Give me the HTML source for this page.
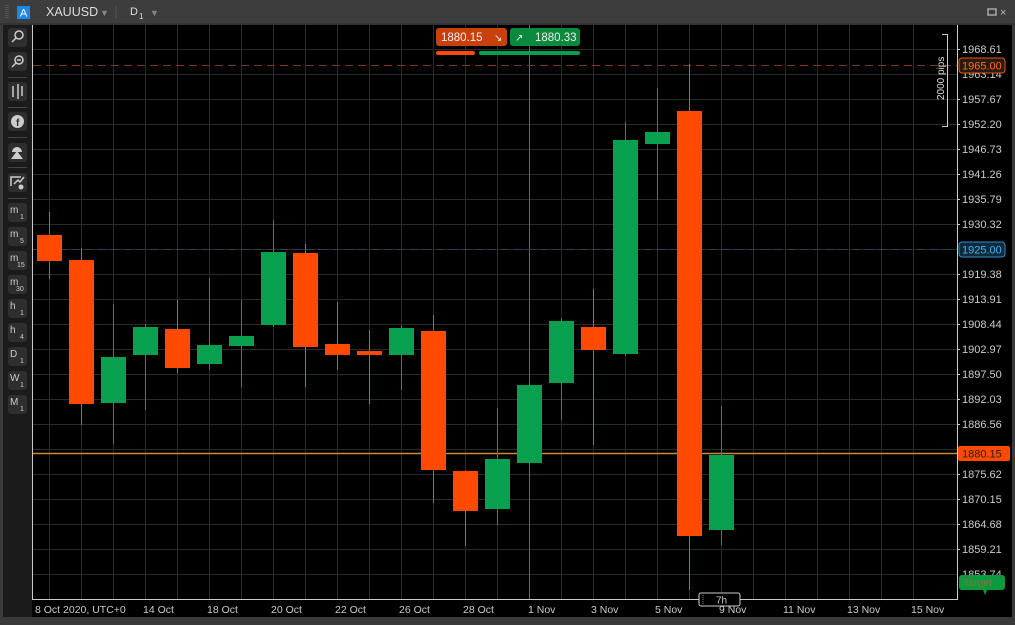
<!DOCTYPE html>
<html><head><meta charset="utf-8"><style>
body{margin:0;width:1015px;height:625px;overflow:hidden;background:#3c3c3c;font-family:"Liberation Sans",sans-serif}
svg{position:absolute;left:0;top:0}
</style></head><body>
<svg width="1015" height="625" xmlns="http://www.w3.org/2000/svg" font-family="Liberation Sans, sans-serif">
<rect width="1015" height="625" fill="#3a3a3a"/>
<rect x="0" y="0" width="1015" height="24" fill="#3d3d3d"/>
<line x1="0" y1="24" x2="1015" y2="24" stroke="#2a2a2a"/>
<g stroke="#666"><line x1="6" y1="5" x2="6" y2="19" stroke-dasharray="1,1"/><line x1="8" y1="5" x2="8" y2="19" stroke-dasharray="1,1"/></g>
<rect x="17" y="6" width="13" height="13" fill="#1e88e5"/>
<text x="23.5" y="16.5" font-size="11" fill="#fff" text-anchor="middle">A</text>
<text x="46" y="16" font-size="12.5" fill="#ddd">XAUUSD</text>
<text x="100" y="16" font-size="9" fill="#888">▼</text>
<line x1="116" y1="6" x2="116" y2="18" stroke="#555"/>
<text x="130" y="15" font-size="11" fill="#ddd">D</text><text x="139" y="19" font-size="8" fill="#ddd">1</text>
<text x="150" y="16" font-size="9" fill="#888">▼</text>
<rect x="988" y="9" width="8" height="6" fill="none" stroke="#bbb" stroke-width="1.3"/>
<text x="1000" y="16" font-size="11" fill="#bbb">×</text>
<rect x="3" y="25" width="1009" height="592" fill="#000"/>
<rect x="3" y="25" width="29" height="592" fill="#1b1b1b"/>
<line x1="32.5" y1="25" x2="32.5" y2="600" stroke="#ccc"/>
<g stroke="#2b2b2b" stroke-width="1">
<line x1="33" y1="49.5" x2="957" y2="49.5"/><line x1="33" y1="74.5" x2="957" y2="74.5"/><line x1="33" y1="99.5" x2="957" y2="99.5"/><line x1="33" y1="124.5" x2="957" y2="124.5"/><line x1="33" y1="149.5" x2="957" y2="149.5"/><line x1="33" y1="174.5" x2="957" y2="174.5"/><line x1="33" y1="199.5" x2="957" y2="199.5"/><line x1="33" y1="224.5" x2="957" y2="224.5"/><line x1="33" y1="249.5" x2="957" y2="249.5"/><line x1="33" y1="274.5" x2="957" y2="274.5"/><line x1="33" y1="299.5" x2="957" y2="299.5"/><line x1="33" y1="324.5" x2="957" y2="324.5"/><line x1="33" y1="349.5" x2="957" y2="349.5"/><line x1="33" y1="374.5" x2="957" y2="374.5"/><line x1="33" y1="399.5" x2="957" y2="399.5"/><line x1="33" y1="424.5" x2="957" y2="424.5"/><line x1="33" y1="449.5" x2="957" y2="449.5"/><line x1="33" y1="474.5" x2="957" y2="474.5"/><line x1="33" y1="499.5" x2="957" y2="499.5"/><line x1="33" y1="524.5" x2="957" y2="524.5"/><line x1="33" y1="549.5" x2="957" y2="549.5"/><line x1="33" y1="574.5" x2="957" y2="574.5"/>
<line x1="49.5" y1="25" x2="49.5" y2="600"/><line x1="81.5" y1="25" x2="81.5" y2="600"/><line x1="113.5" y1="25" x2="113.5" y2="600"/><line x1="145.5" y1="25" x2="145.5" y2="600"/><line x1="177.5" y1="25" x2="177.5" y2="600"/><line x1="209.5" y1="25" x2="209.5" y2="600"/><line x1="241.5" y1="25" x2="241.5" y2="600"/><line x1="273.5" y1="25" x2="273.5" y2="600"/><line x1="305.5" y1="25" x2="305.5" y2="600"/><line x1="337.5" y1="25" x2="337.5" y2="600"/><line x1="369.5" y1="25" x2="369.5" y2="600"/><line x1="401.5" y1="25" x2="401.5" y2="600"/><line x1="433.5" y1="25" x2="433.5" y2="600"/><line x1="465.5" y1="25" x2="465.5" y2="600"/><line x1="497.5" y1="25" x2="497.5" y2="600"/><line x1="561.5" y1="25" x2="561.5" y2="600"/><line x1="593.5" y1="25" x2="593.5" y2="600"/><line x1="625.5" y1="25" x2="625.5" y2="600"/><line x1="657.5" y1="25" x2="657.5" y2="600"/><line x1="689.5" y1="25" x2="689.5" y2="600"/><line x1="721.5" y1="25" x2="721.5" y2="600"/><line x1="753.5" y1="25" x2="753.5" y2="600"/><line x1="785.5" y1="25" x2="785.5" y2="600"/><line x1="817.5" y1="25" x2="817.5" y2="600"/><line x1="849.5" y1="25" x2="849.5" y2="600"/><line x1="881.5" y1="25" x2="881.5" y2="600"/><line x1="913.5" y1="25" x2="913.5" y2="600"/>
</g>
<line x1="529.5" y1="25" x2="529.5" y2="600" stroke="#666"/>
<line x1="33" y1="65.5" x2="957" y2="65.5" stroke="#7a3a22" stroke-dasharray="8,5"/>
<line x1="33" y1="249.5" x2="957" y2="249.5" stroke="#24405a" stroke-dasharray="8,5"/>
<line x1="33" y1="453.5" x2="957" y2="453.5" stroke="#c98a3a" stroke-width="1.5"/>
<g stroke-width="1">
<g fill="#ff4a00" stroke="#ff4a00">
<line x1="49.5" y1="212" x2="49.5" y2="279"/><rect x="37" y="235" width="25" height="26" stroke="none"/>
<line x1="81.5" y1="248" x2="81.5" y2="425"/><rect x="69" y="260" width="25" height="144" stroke="none"/>
<line x1="177.5" y1="300" x2="177.5" y2="373"/><rect x="165" y="329" width="25" height="39" stroke="none"/>
<line x1="305.5" y1="244" x2="305.5" y2="387"/><rect x="293" y="253" width="25" height="94" stroke="none"/>
<line x1="337.5" y1="302" x2="337.5" y2="370"/><rect x="325" y="344" width="25" height="11" stroke="none"/>
<line x1="369.5" y1="330" x2="369.5" y2="404"/><rect x="357" y="351" width="25" height="4" stroke="none"/>
<line x1="433.5" y1="315" x2="433.5" y2="503"/><rect x="421" y="331" width="25" height="139" stroke="none"/>
<line x1="465.5" y1="470" x2="465.5" y2="546"/><rect x="453" y="471" width="25" height="40" stroke="none"/>
<line x1="593.5" y1="289" x2="593.5" y2="445"/><rect x="581" y="327" width="25" height="23" stroke="none"/>
<line x1="689.5" y1="64" x2="689.5" y2="590"/><rect x="677" y="111" width="25" height="425" stroke="none"/>
</g>
<g fill="#07a04e" stroke="#07a04e">
<line x1="113.5" y1="304" x2="113.5" y2="444"/><rect x="101" y="357" width="25" height="46" stroke="none"/>
<line x1="145.5" y1="324" x2="145.5" y2="410"/><rect x="133" y="327" width="25" height="28" stroke="none"/>
<line x1="209.5" y1="278" x2="209.5" y2="370"/><rect x="197" y="345" width="25" height="19" stroke="none"/>
<line x1="241.5" y1="300" x2="241.5" y2="387"/><rect x="229" y="336" width="25" height="10" stroke="none"/>
<line x1="273.5" y1="220" x2="273.5" y2="327"/><rect x="261" y="252" width="25" height="73" stroke="none"/>
<line x1="401.5" y1="325" x2="401.5" y2="390"/><rect x="389" y="328" width="25" height="27" stroke="none"/>
<line x1="497.5" y1="408" x2="497.5" y2="525"/><rect x="485" y="459" width="25" height="50" stroke="none"/>
<line x1="529.5" y1="380" x2="529.5" y2="475"/><rect x="517" y="385" width="25" height="78" stroke="none"/>
<line x1="561.5" y1="318" x2="561.5" y2="420"/><rect x="549" y="321" width="25" height="62" stroke="none"/>
<line x1="625.5" y1="122" x2="625.5" y2="356"/><rect x="613" y="140" width="25" height="214" stroke="none"/>
<line x1="657.5" y1="88" x2="657.5" y2="200"/><rect x="645" y="132" width="25" height="12" stroke="none"/>
<line x1="721.5" y1="406" x2="721.5" y2="545"/><rect x="709" y="455" width="25" height="75" stroke="none"/>
</g></g>
<rect x="436" y="28" width="71" height="18" rx="3" fill="#c8400c"/>
<text x="441" y="41" font-size="11.5" fill="#eee">1880.15</text><text x="494" y="41" font-size="10" fill="#eee">↘</text>
<rect x="510" y="28" width="70" height="18" rx="3" fill="#0b8a3e"/>
<text x="515" y="41" font-size="10" fill="#eee">↗</text><text x="535" y="41" font-size="11.5" fill="#eee">1880.33</text>
<rect x="436" y="51" width="39" height="4" rx="2" fill="#ff4a00"/>
<rect x="479" y="51" width="101" height="4" rx="2" fill="#07a04e"/>
<path d="M942 34.5H947.5V126.5H942" fill="none" stroke="#ccc"/>
<text transform="translate(944,100) rotate(-90)" font-size="10" fill="#ddd">2000 pips</text>
<line x1="957.5" y1="25" x2="957.5" y2="600" stroke="#ccc"/>
<line x1="33" y1="599.5" x2="957" y2="599.5" stroke="#ccc"/>
<g font-size="11" fill="#ccc">
<text x="962" y="53">1968.61</text><text x="962" y="78">1963.14</text><text x="962" y="103">1957.67</text><text x="962" y="128">1952.20</text><text x="962" y="153">1946.73</text><text x="962" y="178">1941.26</text><text x="962" y="203">1935.79</text><text x="962" y="228">1930.32</text><text x="962" y="278">1919.38</text><text x="962" y="303">1913.91</text><text x="962" y="328">1908.44</text><text x="962" y="353">1902.97</text><text x="962" y="378">1897.50</text><text x="962" y="403">1892.03</text><text x="962" y="428">1886.56</text><text x="962" y="478">1875.62</text><text x="962" y="503">1870.15</text><text x="962" y="528">1864.68</text><text x="962" y="553">1859.21</text><text x="962" y="578">1853.74</text>
</g>
<g stroke="#ccc"><line x1="957" y1="49.5" x2="960" y2="49.5"/><line x1="957" y1="99.5" x2="960" y2="99.5"/><line x1="957" y1="124.5" x2="960" y2="124.5"/><line x1="957" y1="149.5" x2="960" y2="149.5"/><line x1="957" y1="174.5" x2="960" y2="174.5"/><line x1="957" y1="199.5" x2="960" y2="199.5"/><line x1="957" y1="224.5" x2="960" y2="224.5"/><line x1="957" y1="274.5" x2="960" y2="274.5"/><line x1="957" y1="299.5" x2="960" y2="299.5"/><line x1="957" y1="324.5" x2="960" y2="324.5"/><line x1="957" y1="349.5" x2="960" y2="349.5"/><line x1="957" y1="374.5" x2="960" y2="374.5"/><line x1="957" y1="399.5" x2="960" y2="399.5"/><line x1="957" y1="424.5" x2="960" y2="424.5"/><line x1="957" y1="474.5" x2="960" y2="474.5"/><line x1="957" y1="499.5" x2="960" y2="499.5"/><line x1="957" y1="524.5" x2="960" y2="524.5"/><line x1="957" y1="549.5" x2="960" y2="549.5"/></g>
<rect x="959" y="58" width="46" height="15" rx="3" fill="#2a1a10" stroke="#e5580f"/><text x="962" y="69.5" font-size="11" fill="#ff6a20">1965.00</text>
<rect x="959" y="242" width="46" height="15" rx="3" fill="#0f2a3a" stroke="#2d8fd0"/><text x="962" y="253.5" font-size="11" fill="#4ab0f0">1925.00</text>
<rect x="958" y="446" width="52" height="15" rx="2" fill="#ff4a00"/><text x="962" y="457.5" font-size="11" fill="#222">1880.15</text>
<rect x="959" y="575" width="46" height="15" rx="3" fill="#0b9a3e"/><text x="963" y="586" font-size="10.5" fill="#7a7a3a">Target</text>
<path d="M983 590L985 595L987 590Z" fill="#0b9a3e"/>
<g font-size="10.5" fill="#ccc">
<text x="35" y="613">8 Oct 2020, UTC+0</text><text x="143" y="613">14 Oct</text><text x="207" y="613">18 Oct</text><text x="271" y="613">20 Oct</text><text x="335" y="613">22 Oct</text><text x="399" y="613">26 Oct</text><text x="463" y="613">28 Oct</text><text x="528" y="613">1 Nov</text><text x="591" y="613">3 Nov</text><text x="655" y="613">5 Nov</text><text x="719" y="613">9 Nov</text><text x="783" y="613">11 Nov</text><text x="847" y="613">13 Nov</text><text x="911" y="613">15 Nov</text>
</g>
<rect x="699" y="593" width="41" height="13" rx="2" fill="#000" stroke="#ccc"/>
<line x1="703" y1="595" x2="703" y2="605" stroke="#888" stroke-dasharray="1,1"/>
<text x="716" y="603.5" font-size="10" fill="#ccc">7h</text>
<g fill="#2e2e2e">
<rect x="8" y="28" width="19" height="19" rx="3"/><rect x="8" y="52" width="19" height="19" rx="3"/>
<rect x="8" y="82" width="19" height="19" rx="3"/><rect x="8" y="112" width="19" height="19" rx="3"/>
<rect x="8" y="143" width="19" height="19" rx="3"/><rect x="8" y="173" width="19" height="19" rx="3"/>
<rect x="8" y="203" width="19" height="19" rx="3"/><rect x="8" y="227" width="19" height="19" rx="3"/><rect x="8" y="251" width="19" height="19" rx="3"/><rect x="8" y="275" width="19" height="19" rx="3"/><rect x="8" y="299" width="19" height="19" rx="3"/><rect x="8" y="323" width="19" height="19" rx="3"/><rect x="8" y="347" width="19" height="19" rx="3"/><rect x="8" y="371" width="19" height="19" rx="3"/><rect x="8" y="395" width="19" height="19" rx="3"/>
</g>
<g stroke="#444"><line x1="8" y1="77.5" x2="27" y2="77.5"/><line x1="8" y1="107.5" x2="27" y2="107.5"/><line x1="8" y1="137.5" x2="27" y2="137.5"/><line x1="8" y1="167.5" x2="27" y2="167.5"/><line x1="8" y1="198.5" x2="27" y2="198.5"/></g>
<g fill="none" stroke="#ccc" stroke-width="1.5">
<circle cx="19" cy="35" r="4"/><line x1="16" y1="38" x2="12" y2="42"/>
<circle cx="19" cy="60" r="4"/><line x1="16" y1="63" x2="12" y2="67"/><line x1="17" y1="60" x2="21" y2="60"/>
<line x1="13" y1="86" x2="13" y2="97"/><line x1="18" y1="84" x2="18" y2="99"/><line x1="22" y1="86" x2="22" y2="96"/>
<path d="M11 186V177H21M14 184L18 180L20 182L24 177"/>
</g>
<circle cx="17.5" cy="121.5" r="6.5" fill="#ccc"/><text x="16" y="126" font-size="10" font-weight="bold" fill="#2e2e2e">f</text>
<path d="M11 159L17 151L23 159Z M12 152A5 5 0 0 1 22 152Z" fill="#ccc"/>
<circle cx="21" cy="187" r="2.5" fill="#ccc"/>
<g font-size="10" fill="#ccc">
<text x="10" y="213">m</text><text x="20" y="219" font-size="7">1</text>
<text x="10" y="237">m</text><text x="20" y="243" font-size="7">5</text>
<text x="10" y="261">m</text><text x="17" y="267" font-size="7">15</text>
<text x="10" y="285">m</text><text x="16" y="291" font-size="7">30</text>
<text x="10" y="309">h</text><text x="20" y="315" font-size="7">1</text>
<text x="10" y="333">h</text><text x="20" y="339" font-size="7">4</text>
<text x="10" y="357">D</text><text x="20" y="363" font-size="7">1</text>
<text x="10" y="381">W</text><text x="20" y="387" font-size="7">1</text>
<text x="10" y="405">M</text><text x="20" y="411" font-size="7">1</text>
</g>
</svg>
</body></html>
